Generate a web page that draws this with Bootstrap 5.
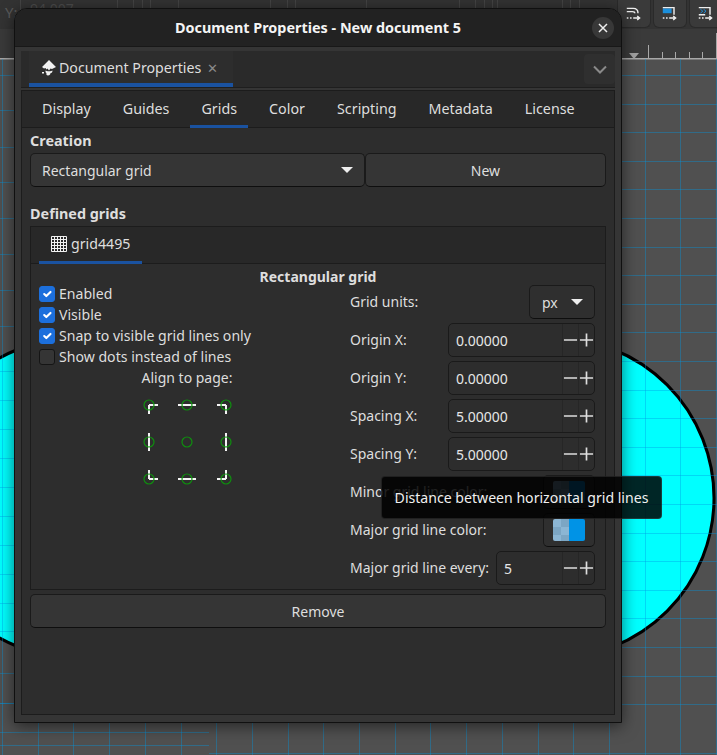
<!DOCTYPE html>
<html lang="en">
<head>
  <meta charset="UTF-8" />
  <meta name="viewport" content="width=device-width, initial-scale=1" />
  <title>Document Properties - New document 5</title>
  <link href="https://cdn.jsdelivr.net/npm/bootstrap@5.3.0/dist/css/bootstrap.min.css" rel="stylesheet" />
  <style>
    body {
      margin: 0;
      width: 717px;
      height: 755px;
      overflow: hidden;
      position: relative;
      background: #505050;
      color: #dedede;
      font-family: "Noto Sans", "Open Sans", sans-serif;
      font-size: 14px;
      line-height: 20px;
    }
    /* inkscape behind the dialog */
    .top-strip { height: 29px; background: #333; gap: 2px; margin-right: -6px; }
    .strip-lines { position: absolute; left: 0; top: 0; }
    .y-label { position: absolute; left: 5px; top: 2px; color: #5a5a5a; font-size: 15px; }
    .y-value { position: absolute; left: 30px; top: -1px; color: #4c4c4c; font-size: 14px; }
    .tool-btn {
      width: 34px; height: 28px; background: #3a3a3a; border-radius: 0 0 6px 6px;
      border: 1px solid #2a2a2a; border-top: 0; display: flex; align-items: center; justify-content: center;
    }
    .canvas-svg { display: block; }

    /* dialog */
    .dlg {
      position: absolute; left: 14px; top: 8px; width: 608px; height: 715px;
      background: #353535; border: 1px solid #101010; border-radius: 13px 13px 0 0;
      box-shadow: 0 3px 16px rgba(0, 0, 0, .55);
    }
    .dlg-title {
      height: 38px; background: #222; border-radius: 12px 12px 0 0; border-bottom: 1px solid #181818;
      display: grid; grid-template-columns: 1fr auto 1fr; align-items: center;
      font-weight: 700; font-size: 14.4px; color: #f4f4f4;
    }
    .close-btn {
      justify-self: end; width: 22px; height: 22px; margin-right: 7px; padding: 0; border: 0; border-radius: 50%;
      background: #383838; display: flex; align-items: center; justify-content: center;
    }
    .dlg-body { padding: 4px 6px 0 6px; }
    .dock-bar { height: 37px; background: #2a2a2a; border-bottom: 1px solid #1e1e1e; padding-left: 8px; align-items: stretch; }
    .dock-tab {
      width: 204px; background: #2d2d2d; border-bottom: 4px solid #1a52a0; color: #dedede;
      display: flex; align-items: center; padding: 2px 0 0 12px; gap: 2px; font-size: 14.2px;
    }
    .dock-x { margin-left: 4px; color: #8a8a8a; font-size: 13px; }
    .dock-more {
      width: 31px; height: 30px; margin-top: 3px; background: #2f2f2f; border: 0; border-radius: 4px; padding: 0;
      display: flex; align-items: center; justify-content: center;
    }
    .note-frame { margin-top: 2px; height: 625px; border: 1px solid #1c1c1c; background: #2d2d2d; }
    .tab-row { height: 37px; background: #282828; border-bottom: 1px solid #1c1c1c; padding-left: 9px; }
    .tab-row .nav-link {
      height: 37px; padding: 0 11px; margin-right: 10px; color: #dedede; line-height: 35px; border-bottom: 3px solid transparent;
      border-radius: 0; font-size: 14.3px;
    }
    .tab-row .nav-link.active { border-bottom-color: #1a52a0; }
    .page { padding: 1px 8px 0 8px; }
    .sect-title { font-weight: 700; font-size: 14.4px; height: 22px; line-height: 22px; margin-top: 1px; }
    .gtk-btn {
      height: 34px; padding: 0; background: #353535; border: 1px solid #1a1a1a; border-bottom-color: #0e0e0e;
      border-radius: 5px; color: #dedede; font-size: 14px; display: flex; align-items: center; justify-content: center;
    }
    .gtk-btn:hover { background: #353535; color: #dedede; border-color: #1a1a1a; }
    .combo-row { margin-top: 1px; }
    .combo-wide { width: 335px; justify-content: space-between; padding: 0 11px 0 11px; }
    .new-btn { width: 241px; }
    .drop-tri { width: 0; height: 0; border-left: 6px solid transparent; border-right: 6px solid transparent; border-top: 6px solid #eee; }
    .defined-title { margin-top: 16px; height: 22px; }
    .grid-frame { height: 364px; margin-top: 1px; border: 1px solid #1c1c1c; background: #2d2d2d; }
    .grid-tabs { height: 37px; background: #282828; border-bottom: 1px solid #1c1c1c; padding-left: 8px; }
    .grid-tab { width: 103px; height: 37px; border-bottom: 3px solid #1a52a0; display: flex; align-items: center; padding-left: 12px; gap: 4px; font-size: 14.2px; }
    .grid-head { text-align: center; font-weight: 700; font-size: 14px; height: 20px; line-height: 20px; margin-top: 3px; }
    .grid-cols { padding: 0 10px 0 8px; margin-top: -5px; }
    .left-col { width: 240px; padding-top: 1px; }
    .chk-row { height: 21px; display: flex; align-items: center; gap: 4px; margin: 0; padding: 0; font-size: 14.1px; }
    .chk-row .form-check-input {
      float: none; width: 16px; height: 16px; margin: 0; background-color: #353535; border: 1px solid #151515; border-radius: 3px;
    }
    .chk-row .form-check-input:checked { background-color: #1c6fdc; border-color: #1c6fdc; }
    .align-label { text-align: center; width: 100%; height: 22px; line-height: 22px; font-size: 14px; padding-left: 56px; }
    .align-svg { display: block; margin: 10px 0 0 102px; }
    .right-col { width: 245px; margin-top: 1px; }
    .prop-row { height: 38px; }
    .prop-row label { margin: 0; font-size: 14px; }
    .spin-box {
      height: 34px; width: 147px; display: flex; align-items: stretch; background: #2d2d2d;
      border: 1px solid #1a1a1a; border-radius: 5px; overflow: hidden;
    }
    .spin-box.short { width: 99px; }
    .spin-box .form-control {
      flex: 1 1 0; min-width: 0; padding: 0 0 0 7px; background: transparent; border: 0; border-radius: 0; color: #e6e6e6; font-size: 14px; box-shadow: none;
    }
    .spin-step { width: 16px; border-left: 1px solid #262626; display: flex; align-items: center; justify-content: center; }
    .unit-combo { width: 66px; justify-content: space-between; padding: 0 11px 0 12px; background: #2f2f2f; }
    .unit-combo:hover { background: #2f2f2f; }
    .color-btn { width: 52px; background: #2f2f2f; }
    .color-btn:hover { background: #2f2f2f; }
    .swatch { width: 32px; height: 22px; border-radius: 2px; display: flex; overflow: hidden; }
    .swatch-a { width: 16px; background: repeating-conic-gradient(#7ca6c4 0 25%, #8cb6d4 0 50%) 0 0 / 16px 16px; }
    .swatch-b { width: 16px; background: #0093e6; }
    .remove-btn { width: 576px; margin-top: 4px; }
    .hover-tip {
      position: absolute; left: 381px; top: 476px; width: 281px; height: 43px; padding-top: 11px; text-align: center;
      background: rgba(0, 0, 0, .85); border: 1px solid rgba(255, 255, 255, .1); border-radius: 4px; color: #f0f0f0; font-size: 14.1px;
    }
  </style>
</head>
<body>
  <svg width="0" height="0" class="position-absolute">
    <symbol id="ic-minus" viewBox="0 0 16 16"><path d="M1 8h14" stroke="#dedede" stroke-width="1.8" /></symbol>
    <symbol id="ic-plus" viewBox="0 0 16 16"><path d="M1 8h14M8 1v14" stroke="#dedede" stroke-width="1.8" /></symbol>
  </svg>

  <!-- inkscape window behind -->
  <div class="top-strip d-flex justify-content-end">
    <svg id="stripLines" class="strip-lines" width="620" height="10"></svg>
    <span class="y-label">Y:</span>
    <span class="y-value">94.007</span>
    <div class="tool-btn">
      <svg width="16" height="16" viewBox="0 0 20 20" fill="none" stroke="#eee" stroke-width="1.8"><path d="M1 3h8c4 0 6 2 6 6M1 7h7c2 0 3 1 3 2" /><path d="M1 15h2M5 15h2M9 15h7M14 12.500l3 2.500-3 2.500" /></svg>
    </div>
    <div class="tool-btn">
      <svg width="16" height="16" viewBox="0 0 20 20" fill="none" stroke="#eee" stroke-width="1.8"><rect x="1" y="3" width="11" height="6" fill="#1b8fdc" stroke="none" /><path d="M1 2h14v9" /><path d="M1 15h2M5 15h2M9 15h7M14 12.500l3 2.500-3 2.500" /></svg>
    </div>
    <div class="tool-btn">
      <svg width="16" height="16" viewBox="0 0 20 20" fill="none" stroke="#eee" stroke-width="1.8"><path d="M1 2h14v9M1 11h8" /><path d="M3 4l3 2.500-3 2.500M7 4l3 2.500-3 2.500" stroke="#1b8fdc" stroke-width="1.200" /><path d="M1 15h2M5 15h2M9 15h7M14 12.500l3 2.500-3 2.500" /></svg>
    </div>
  </div>
  <svg id="desk" class="canvas-svg" width="717" height="726" viewBox="0 29 717 726"></svg>

  <!-- dialog -->
  <div class="dlg">
    <div class="dlg-title">
      <span></span>
      <span>Document Properties - New document 5</span>
      <button class="close-btn" type="button" aria-label="Close">
        <svg width="10" height="10" viewBox="0 0 10 10"><path d="M1 1l8 8M9 1l-8 8" stroke="#eee" stroke-width="1.500" /></svg>
      </button>
    </div>
    <div class="dlg-body">
      <div class="dock-bar d-flex justify-content-between">
        <div class="dock-tab">
          <svg width="16" height="16" viewBox="0 0 16 16" fill="#f2f2f2"><path d="M8 0L1 7l2 1.500 1.500-.5 1 1.500 1-1 1.500 2 1.500-2 1.500.5L15 7z" /><path d="M1 12h2v1.500H1zM4.500 10.500c1 1 6 1 7 0 0 2-1 2.500-2 2.500 0 1.500-1 2.500-2.500 2.500S5 14.500 5.500 13c-1 0-1-1.500-1-2.500z" /></svg>
          <span>Document Properties</span>
          <span class="dock-x">✕</span>
        </div>
        <button class="dock-more" type="button" aria-label="More">
          <svg width="14" height="9" viewBox="0 0 14 9" fill="none"><path d="M1 1.500l6 6 6-6" stroke="#8a8a8a" stroke-width="2" /></svg>
        </button>
      </div>

      <div class="note-frame">
        <ul class="nav tab-row">
          <li class="nav-item"><a class="nav-link" href="#">Display</a></li>
          <li class="nav-item"><a class="nav-link" href="#">Guides</a></li>
          <li class="nav-item"><a class="nav-link active" href="#">Grids</a></li>
          <li class="nav-item"><a class="nav-link" href="#">Color</a></li>
          <li class="nav-item"><a class="nav-link" href="#">Scripting</a></li>
          <li class="nav-item"><a class="nav-link" href="#">Metadata</a></li>
          <li class="nav-item"><a class="nav-link" href="#">License</a></li>
        </ul>

        <div class="page">
          <div class="sect-title">Creation</div>
          <div class="d-flex combo-row">
            <button class="btn gtk-btn combo-wide" type="button"><span>Rectangular grid</span><span class="drop-tri"></span></button>
            <button class="btn gtk-btn new-btn" type="button">New</button>
          </div>

          <div class="sect-title defined-title">Defined grids</div>
          <div class="grid-frame">
            <div class="grid-tabs d-flex">
              <div class="grid-tab">
                <svg width="16" height="16" viewBox="0 0 16 16" fill="none" stroke="#f2f2f2" stroke-width="1"><path d="M.5.5h15v15H.5zM3.500 0v16M6.500 0v16M9.500 0v16M12.500 0v16M0 3.500h16M0 6.500h16M0 9.500h16M0 12.500h16" /></svg>
                <span>grid4495</span>
              </div>
            </div>
            <div class="grid-head">Rectangular grid</div>
            <div class="grid-cols d-flex justify-content-between">
              <div class="left-col">
                <label class="chk-row"><input class="form-check-input" type="checkbox" checked /><span>Enabled</span></label>
                <label class="chk-row"><input class="form-check-input" type="checkbox" checked /><span>Visible</span></label>
                <label class="chk-row"><input class="form-check-input" type="checkbox" checked /><span>Snap to visible grid lines only</span></label>
                <label class="chk-row"><input class="form-check-input" type="checkbox" /><span>Show dots instead of lines</span></label>
                <div class="align-label">Align to page:</div>
                <svg id="alignPad" class="align-svg" width="92" height="88" viewBox="0 0 92 88"></svg>
              </div>
              <div class="right-col">
                <div class="prop-row d-flex justify-content-between align-items-center">
                  <label>Grid units:</label>
                  <button class="btn gtk-btn unit-combo" type="button"><span>px</span><span class="drop-tri"></span></button>
                </div>
                <div class="prop-row d-flex justify-content-between align-items-center">
                  <label>Origin X:</label>
                  <div class="spin-box"><input class="form-control" value="0.00000" /><span class="spin-step"><svg width="16" height="16"><use href="#ic-minus" /></svg></span><span class="spin-step"><svg width="16" height="16"><use href="#ic-plus" /></svg></span></div>
                </div>
                <div class="prop-row d-flex justify-content-between align-items-center">
                  <label>Origin Y:</label>
                  <div class="spin-box"><input class="form-control" value="0.00000" /><span class="spin-step"><svg width="16" height="16"><use href="#ic-minus" /></svg></span><span class="spin-step"><svg width="16" height="16"><use href="#ic-plus" /></svg></span></div>
                </div>
                <div class="prop-row d-flex justify-content-between align-items-center">
                  <label>Spacing X:</label>
                  <div class="spin-box"><input class="form-control" value="5.00000" /><span class="spin-step"><svg width="16" height="16"><use href="#ic-minus" /></svg></span><span class="spin-step"><svg width="16" height="16"><use href="#ic-plus" /></svg></span></div>
                </div>
                <div class="prop-row d-flex justify-content-between align-items-center">
                  <label>Spacing Y:</label>
                  <div class="spin-box"><input class="form-control" value="5.00000" /><span class="spin-step"><svg width="16" height="16"><use href="#ic-minus" /></svg></span><span class="spin-step"><svg width="16" height="16"><use href="#ic-plus" /></svg></span></div>
                </div>
                <div class="prop-row d-flex justify-content-between align-items-center">
                  <label>Minor grid line color:</label>
                  <button class="btn gtk-btn color-btn" type="button"><span class="swatch"><span class="swatch-a"></span><span class="swatch-b"></span></span></button>
                </div>
                <div class="prop-row d-flex justify-content-between align-items-center">
                  <label>Major grid line color:</label>
                  <button class="btn gtk-btn color-btn" type="button"><span class="swatch"><span class="swatch-a"></span><span class="swatch-b"></span></span></button>
                </div>
                <div class="prop-row d-flex justify-content-between align-items-center">
                  <label>Major grid line every:</label>
                  <div class="spin-box short"><input class="form-control" value="5" /><span class="spin-step"><svg width="16" height="16"><use href="#ic-minus" /></svg></span><span class="spin-step"><svg width="16" height="16"><use href="#ic-plus" /></svg></span></div>
                </div>
              </div>
            </div>
          </div>
          <button class="btn gtk-btn remove-btn" type="button">Remove</button>
        </div>
      </div>
    </div>
  </div>

  <div class="hover-tip">Distance between horizontal grid lines</div>

  <script src="https://cdn.jsdelivr.net/npm/bootstrap@5.3.0/dist/js/bootstrap.bundle.min.js"></script>
  <script>
    // toolbar field edges, only a few px of them show above the dialog
    let strip = "";
    [20, 117, 133, 142, 150, 178, 270, 287, 295, 366, 459, 475, 484, 492, 497, 562, 570, 579].forEach((x) => {
      strip += `<rect x="${x}" y="0" width="1" height="10" fill="#444" />`;
    });
    document.getElementById("stripLines").innerHTML = strip;

    // canvas: circles, then grid lines on top
    const hline = (x1, x2, y) => `<line x1="${x1}" y1="${y + 0.5}" x2="${x2}" y2="${y + 0.5}" stroke="#0099e5" stroke-opacity=".38" />`;
    let desk = '<rect x="0" y="29" width="717" height="30" fill="#3a3a3a" />';
    desk += '<rect x="0" y="58" width="717" height="1.500" fill="#a8a8a8" />';
    [662, 675, 689, 702].forEach((x) => {
      desk += `<rect x="${x}" y="52" width="1" height="7" fill="#a8a8a8" />`;
    });
    desk += '<rect x="648" y="45" width="1" height="14" fill="#a8a8a8" /><rect x="716" y="33" width="1" height="26" fill="#a8a8a8" />';
    desk += '<path d="M629 53h10l-5 6z" fill="#a0a0a0" />';
    desk += '<circle cx="77" cy="498" r="160" fill="#00ffff" stroke="#000" stroke-width="3" />';
    desk += '<circle cx="554" cy="498" r="160" fill="#00ffff" stroke="#000" stroke-width="3" />';
    for (let i = 0; i * 35.7 + 2 < 717; i++) {
      const x = Math.round(i * 35.7 + 2) + 0.5;
      desk += `<line x1="${x}" y1="59" x2="${x}" y2="755" stroke="#0099e5" stroke-opacity=".38" />`;
    }
    for (let i = 0; i < 23; i++) desk += hline(622, 717, Math.round(75 + i * 28.6));
    [75, 110, 147, 182, 218, 254, 290, 326, 371, 400, 429, 458, 487, 516, 545, 574, 603, 631, 673, 703].forEach((y) => {
      desk += hline(0, 15, y);
    });
    [703, 732, 745].forEach((y) => { desk += hline(0, 209, y); });
    desk += hline(209, 717, 753);
    document.getElementById("desk").innerHTML = desk;

    // 3x3 snap handles
    const xs = [8, 46, 85], ys = [6, 43, 80];
    let pad = "";
    ys.forEach((y, r) => xs.forEach((x, c) => {
      const h = c === 0 ? [0, 9] : c === 2 ? [-9, 0] : [-9, 9];
      const v = r === 0 ? [0, 9] : r === 2 ? [-9, 0] : [-9, 9];
      if (r !== 1) pad += `<path d="M${x + h[0]} ${y}H${x + h[1]}" stroke="#f4f4f4" stroke-width="2" />`;
      if (c !== 1) pad += `<path d="M${x} ${y + v[0]}V${y + v[1]}" stroke="#f4f4f4" stroke-width="2" />`;
      pad += `<circle cx="${x}" cy="${y}" r="5" fill="none" stroke="#0f8f0f" stroke-width="1.200" />`;
    }));
    document.getElementById("alignPad").innerHTML = pad;
  </script>
</body>
</html>
